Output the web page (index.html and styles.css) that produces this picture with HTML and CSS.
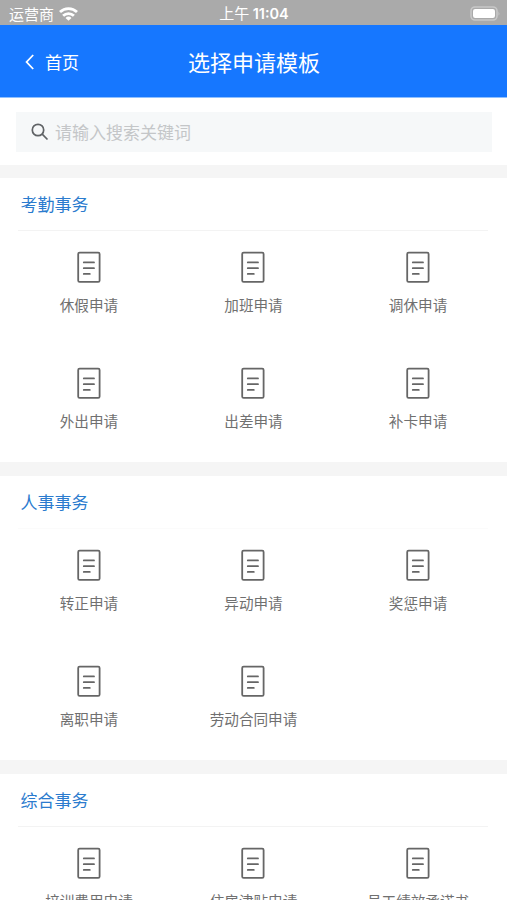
FILE: index.html
```html
<!DOCTYPE html>
<html lang="zh-CN">
<head>
<meta charset="utf-8">
<title>选择申请模板</title>
<link rel="stylesheet" href="styles.css">
</head>
<body>
<svg class="defs" aria-hidden="true">
  <symbol id="doc" viewBox="0 0 24 32">
    <rect x="1.2" y="1.6" width="21.4" height="29.2" rx="1.4" stroke-width="1.8"/>
    <path d="M6.8 11.4h10.2M6.8 17.2h10.2M6.8 22.9h6" stroke-width="1.8" stroke-linecap="round"/>
  </symbol>
</svg>
<div class="status">
  <div class="carrier">运营商
    <svg class="wifi" width="19" height="14" viewBox="0 0 19 14" fill="none" stroke="#fff" stroke-width="2.8">
      <path d="M1 5.1a12.2 12.2 0 0 1 17 0M4.1 8.7a7.8 7.8 0 0 1 10.8 0"/>
      <path d="M9.5 13.8L6.5 10.9a4.3 4.3 0 0 1 6 0z" fill="#fff" stroke="none"/>
    </svg>
  </div>
  <div class="time">上午 <b>11:04</b></div>
  <div class="power">
    <svg width="31" height="15" viewBox="0 0 31 15">
      <rect x="1" y="1" width="26" height="13" rx="4" fill="none" stroke="#c8c8c8" stroke-width="1.6"/>
      <rect x="3" y="3" width="22" height="9" rx="2.2" fill="#fff"/>
      <path d="M28.5 5.2q1.8 2.3 0 4.6z" fill="#c8c8c8"/>
    </svg>
  </div>
</div>
<header class="nav">
  <a class="back">
    <svg width="9" height="16" viewBox="0 0 9 16" fill="none" stroke="#fff" stroke-width="1.8"><path d="M8.2 1L1.6 8l6.6 7"/></svg>
    首页</a>
  <h1>选择申请模板</h1>
</header>
<div class="search">
  <div class="field">
    <svg width="18" height="18" viewBox="0 0 18 18" fill="none" stroke="#606366" stroke-width="1.7"><circle cx="7" cy="7" r="5.7"/><path d="M11.2 11.2L16.5 16.5"/></svg>
    <span>请输入搜索关键词</span>
  </div>
</div>
<section class="first">
  <h2>考勤事务</h2>
  <div class="grid">
    <div class="item"><svg><use href="#doc"/></svg><span>休假申请</span></div>
    <div class="item"><svg><use href="#doc"/></svg><span>加班申请</span></div>
    <div class="item"><svg><use href="#doc"/></svg><span>调休申请</span></div>
    <div class="item"><svg><use href="#doc"/></svg><span>外出申请</span></div>
    <div class="item"><svg><use href="#doc"/></svg><span>出差申请</span></div>
    <div class="item"><svg><use href="#doc"/></svg><span>补卡申请</span></div>
  </div>
</section>
<section>
  <h2 class="faint">人事事务</h2>
  <div class="grid">
    <div class="item"><svg><use href="#doc"/></svg><span>转正申请</span></div>
    <div class="item"><svg><use href="#doc"/></svg><span>异动申请</span></div>
    <div class="item"><svg><use href="#doc"/></svg><span>奖惩申请</span></div>
    <div class="item"><svg><use href="#doc"/></svg><span>离职申请</span></div>
    <div class="item"><svg><use href="#doc"/></svg><span>劳动合同申请</span></div>
  </div>
</section>
<section>
  <h2>综合事务</h2>
  <div class="grid">
    <div class="item"><svg><use href="#doc"/></svg><span>培训费用申请</span></div>
    <div class="item"><svg><use href="#doc"/></svg><span>住房津贴申请</span></div>
    <div class="item"><svg><use href="#doc"/></svg><span>员工绩效承诺书</span></div>
  </div>
</section>
</body>
</html>
```
FILE: styles.css
```css
* { box-sizing: border-box; }
body {
  margin: 0;
  height: 900px;
  overflow: hidden;
  background: #fff;
  font-family: "Noto Sans CJK SC", sans-serif;
  color: #707070;
}
.defs { display: none; }
svg { flex: none; }
.status {
  display: grid;
  grid-template-columns: 1fr auto 1fr;
  align-items: center;
  height: 25px;
  padding: 1px 6px 0 9px;
  background: #aaa;
  color: #fff;
  font-size: 15px;
  line-height: 24px;
}
.carrier { display: flex; align-items: center; gap: 5px; }
.time { font-size: 15px; margin-right: 2px; }
.time b { font: 600 14.5px/24px Inter, sans-serif; }
.power { display: flex; justify-content: flex-end; }
.nav {
  display: grid;
  grid-template-columns: 1fr auto 1fr;
  align-items: center;
  height: 73px;
  padding: 0 24px 0 25px;
  background: #1677ff;
  border-bottom: 1px solid #8fc0ff;
  color: #fff;
}
.back { display: flex; align-items: center; gap: 11px; padding-top: 2px; font-size: 17px; line-height: 24px; }
.nav h1 { margin: 0; font-size: 22px; font-weight: 400; line-height: 32px; }
.search { padding: 14px 15px 13px 16px; }
.field {
  display: flex;
  align-items: center;
  gap: 6px;
  height: 40px;
  padding-left: 15px;
  background: #f6f8f9;
  color: #c4c6c8;
  font-size: 17px;
  line-height: 24px;
}
section { border-top: 14px solid #f5f5f5; }
section.first { border-top-width: 13px; }
h2 {
  margin: 0 19px 0 18px;
  padding-left: 2.5px;
  height: 53px;
  border-bottom: 1px solid #f3f3f3;
  color: #2b7bce;
  font-size: 17px;
  font-weight: 400;
  line-height: 52px;
}
h2.faint { border-color: #fbfbfb; }
.grid {
  display: grid;
  grid-template-columns: repeat(3, 1fr);
  grid-auto-rows: 116px;
  margin-top: -1px;
  padding: 0 6.7px;
}
.item {
  display: flex;
  flex-direction: column;
  align-items: center;
  padding-top: 21px;
}
.item svg { width: 24px; height: 32px; fill: none; stroke: #666; }
.item span { margin-top: 11px; font-size: 14.6px; line-height: 22px; white-space: nowrap; }
```
